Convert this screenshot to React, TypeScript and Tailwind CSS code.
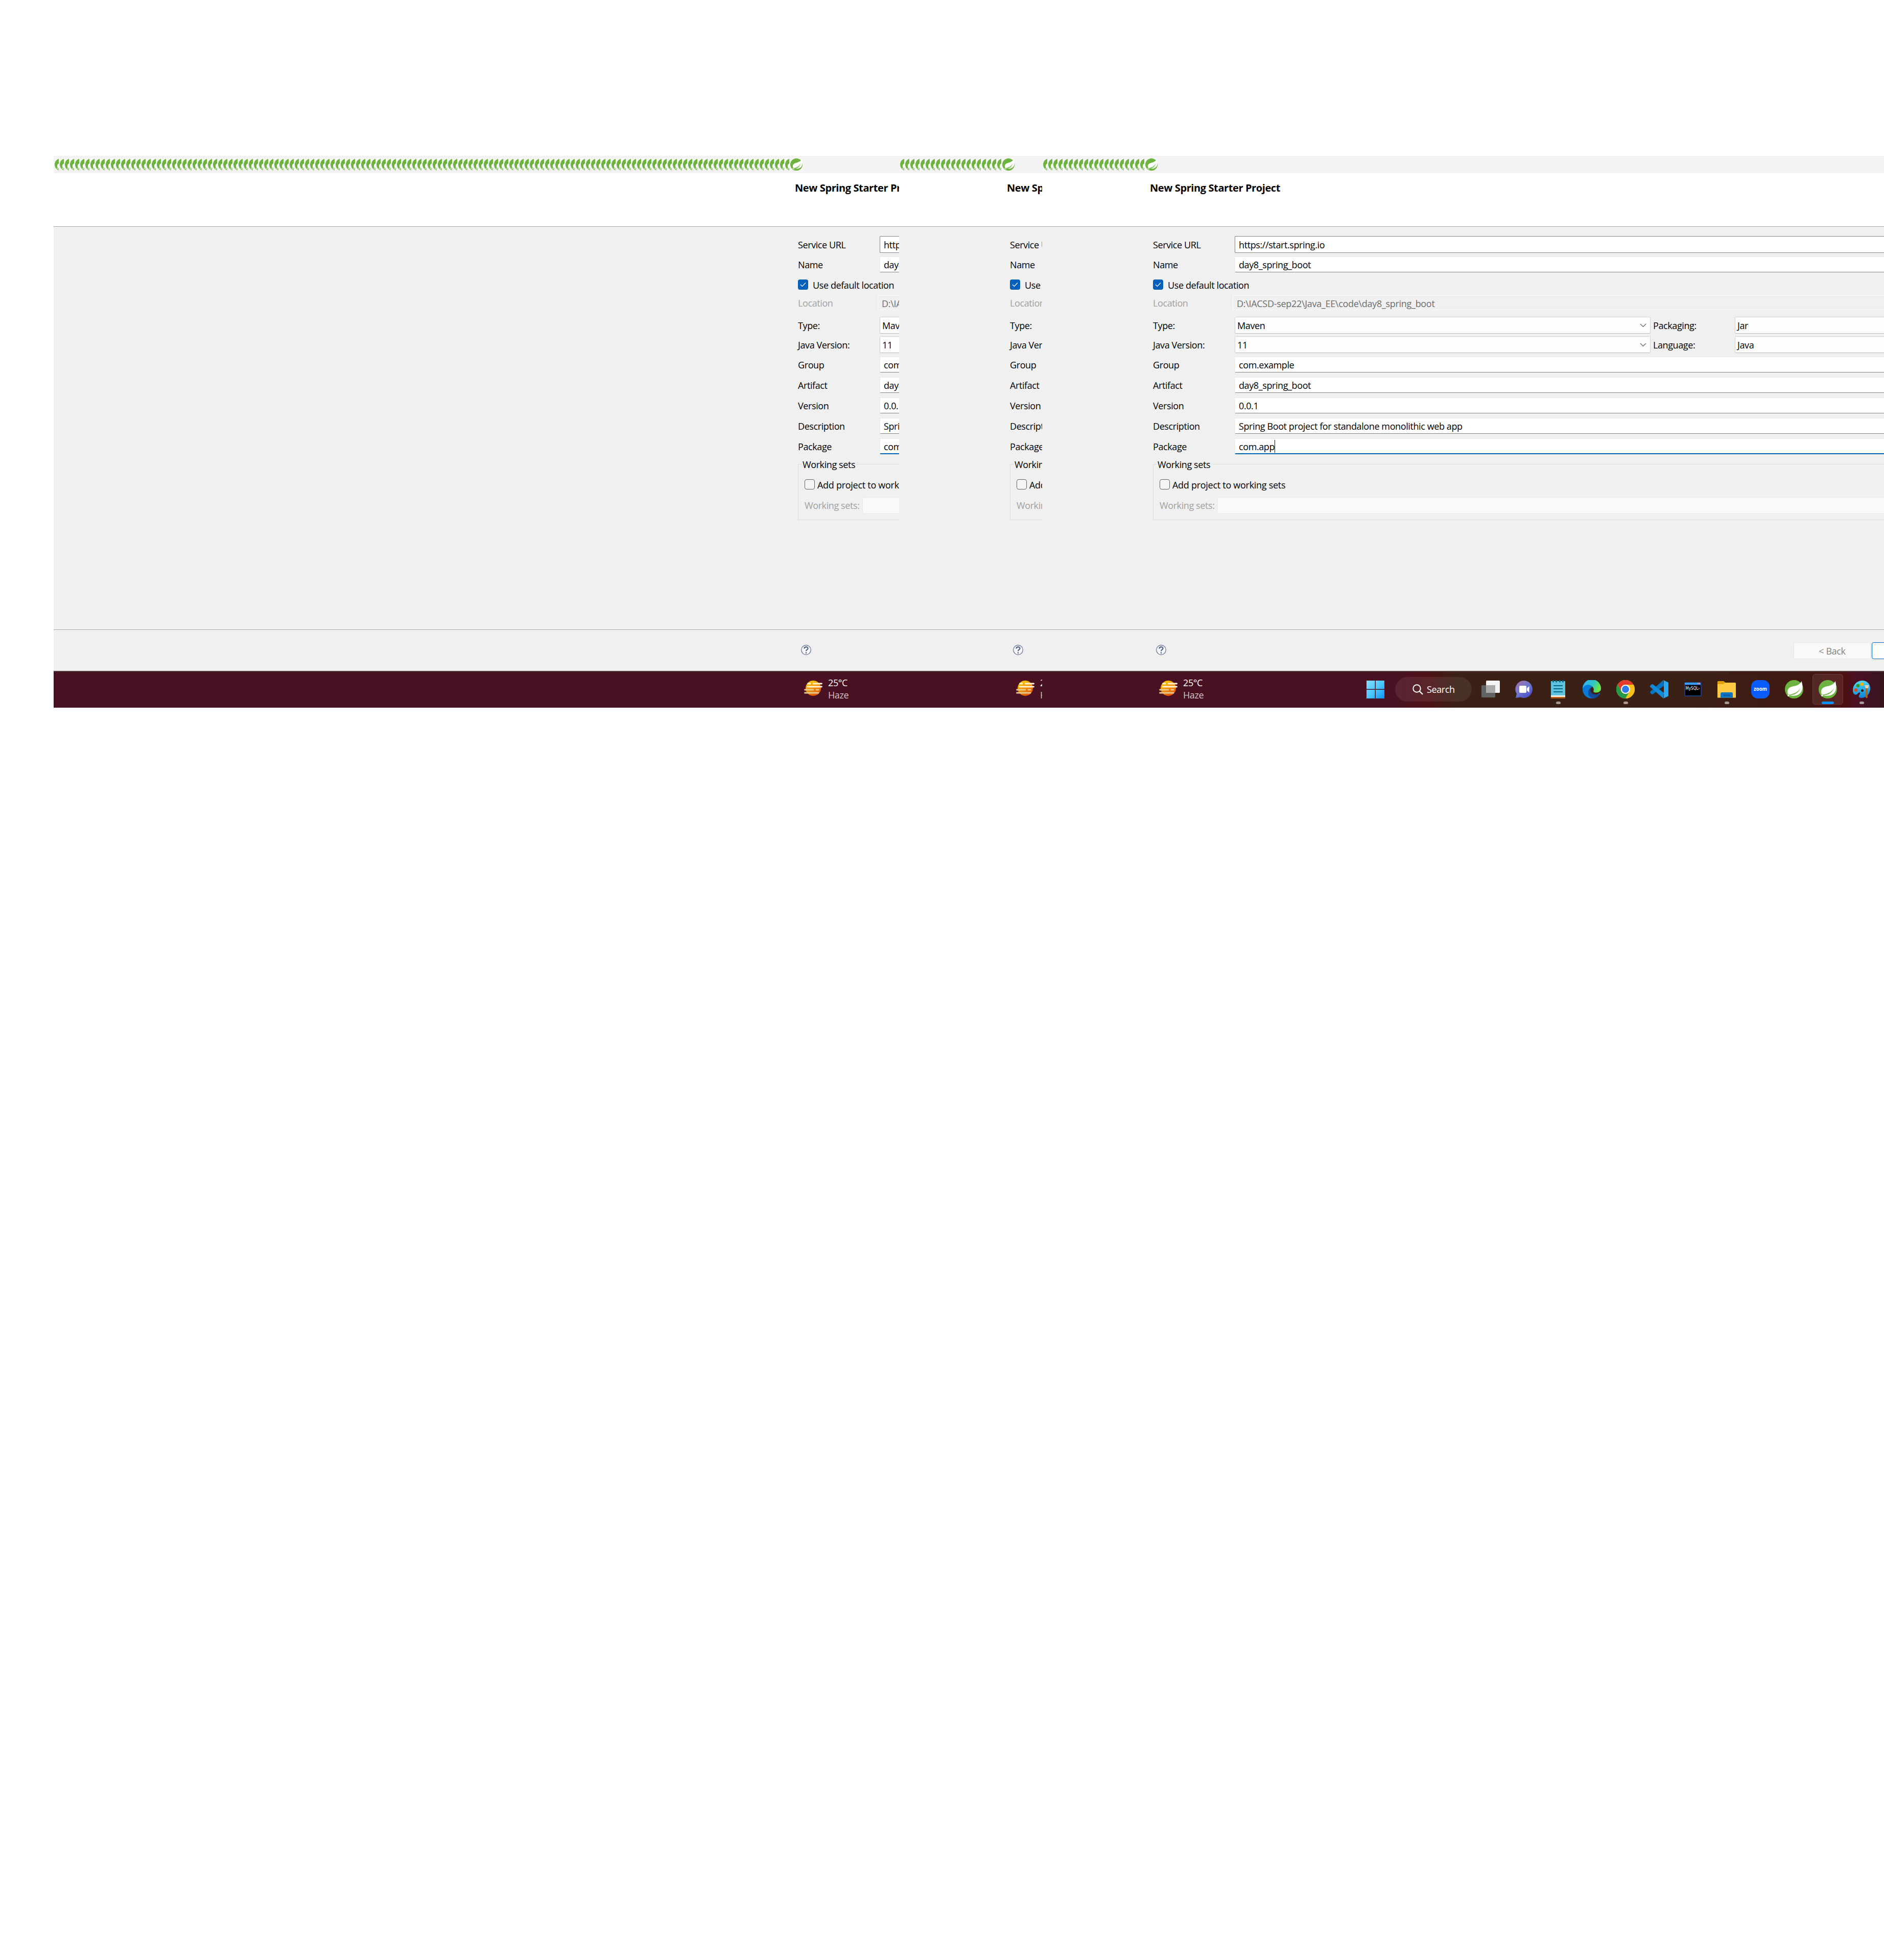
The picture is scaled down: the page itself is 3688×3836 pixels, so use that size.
import React from "react";

const BASE = "whitespace-nowrap font-['Open_Sans','Noto_Sans',sans-serif] text-[18px] leading-[24px] tracking-[-0.4px]";

function LeafIcon({ slice = false }: { slice?: boolean }) {
  return (
    <svg width={slice ? 8 : 24} height="24" viewBox={slice ? "0 0 8 24" : "0 0 24 24"} className="block shrink-0">
      <rect width="24" height="24" fill="#ffffff" opacity="0.3" />
      <circle cx="12" cy="12" r="12" fill="#6db33f" />
      <path d="M22.500 1.500C20 6 16 7.500 11.500 8.700C7 10 4.700 12 4.900 15.500C5 18 6.500 19 8 19.500C14 21.500 21 19.500 23.300 13C24.200 9 23.500 5 22.500 1.500Z" fill="#fff" />
      <path d="M20.500 9C18 14.500 13.500 17.500 8 18.500L6.500 20.500C13 21 18.500 18 20.500 9Z" fill="#8cc566" />
      <path d="M4.500 19L7.500 21.500" stroke="#e4f1dc" strokeWidth="1.400" />
    </svg>
  );
}

function Row({ className, children }: { className: string; children: React.ReactNode }) {
  return <div className={`flex items-start ${className}`}>{children}</div>;
}

function Label({ children, className }: { children: React.ReactNode; className: string }) {
  return <div className={`shrink-0 ${className}`}>{children}</div>;
}

function Field({ label, value, mt, focus = false }: { label: string; value: string; mt: string; focus?: boolean }) {
  return (
    <Row className={`h-[31px] ${mt}`}>
      <Label className="w-[160px] pt-1">{label}</Label>
      <div className={`flex h-[31px] grow items-center rounded-l-[2px] border-t border-l border-[#ebebeb] bg-white pl-[7px] pt-px ${focus ? "border-b-2 border-b-[#0067c0]" : "border-b border-b-[#868686]"}`}>
        <span>{value}</span>
        {focus && <span className="h-[25px] w-px bg-black" />}
      </div>
    </Row>
  );
}

function Combo({ value, className, arrow = false }: { value: string; className: string; arrow?: boolean }) {
  return (
    <div className={`flex h-[33px] shrink-0 items-center justify-between rounded-[2px] border border-[#d2d2d2] border-b-[#bcbcbc] bg-[#fdfdfd] pl-1 pr-[7px] pt-px ${className}`}>
      <span>{value}</span>
      {arrow && (
        <svg width="13" height="8" viewBox="0 0 13 8" className="mb-px">
          <path d="M1 1L6.500 6.500L12 1" fill="none" stroke="#5f5f5f" strokeWidth="1.200" />
        </svg>
      )}
    </div>
  );
}

function Form() {
  return (
    <div className="flex h-[787px] flex-col bg-[#f0f0f0] pl-[17px]">
      <Row className="mt-[17px] h-[33px]">
        <Label className="w-[160px] pt-[5px]">Service URL</Label>
        <div className="flex h-[33px] grow items-center rounded-l-[2px] border border-r-0 border-[#868686] bg-white pl-[7px]">https://start.spring.io</div>
      </Row>
      <Field label="Name" value="day8_spring_boot" mt="mt-[7px]" />
      <Row className="mt-[14px] h-5">
        <div className="flex size-5 shrink-0 items-center justify-center rounded-[4px] bg-[#005fb8]">
          <svg width="12" height="10" viewBox="0 0 12 10">
            <path d="M1 5L4.500 8.500L11 1.500" fill="none" stroke="#fff" strokeWidth="1.200" />
          </svg>
        </div>
        <span className="-mt-px pl-[9px]">Use default location</span>
      </Row>
      <Row className="mt-[11px] h-[29px]">
        <Label className="w-[156px] pt-[3px] text-[#a0a0a0]">Location</Label>
        <div className="flex h-[29px] grow items-center border border-r-0 border-[#fafafa] pl-[7px] pt-[2px] tracking-[-0.3px] text-[#6d6d6d]">D:\IACSD-sep22\Java_EE\code\day8_spring_boot</div>
      </Row>
      <Row className="mt-[13px] h-[33px]">
        <Label className="w-[160px] pt-[5px]">Type:</Label>
        <Combo value="Maven" className="w-[814px]" arrow />
        <Label className="w-[165px] pl-[5px] pt-[5px]">Packaging:</Label>
        <Combo value="Jar" className="w-[400px]" />
      </Row>
      <Row className="mt-[5px] h-[33px]">
        <Label className="w-[160px] pt-[5px]">Java Version:</Label>
        <Combo value="11" className="w-[814px]" arrow />
        <Label className="w-[165px] pl-[5px] pt-[5px]">Language:</Label>
        <Combo value="Java" className="w-[400px]" />
      </Row>
      <Field label="Group" value="com.example" mt="mt-[7px]" />
      <Field label="Artifact" value="day8_spring_boot" mt="mt-[9px]" />
      <Field label="Version" value="0.0.1" mt="mt-[9px]" />
      <Field label="Description" value="Spring Boot project for standalone monolithic web app" mt="mt-[9px]" />
      <Field label="Package" value="com.app" mt="mt-[9px]" focus />
      <div className="mt-[19px] h-[110px] border border-r-0 border-[#dcdcdc]">
        <div className="-mt-[12px] ml-[6px] w-[107px] bg-[#f0f0f0] pl-[2px]">Working sets</div>
        <div className="mt-[17px] flex h-5 items-start pl-3">
          <span className="size-5 shrink-0 rounded-[4px] border border-[#626262] bg-[#f5f5f5]" />
          <span className="-mt-px pl-[5px] tracking-[-0.28px]">Add project to working sets</span>
        </div>
        <div className="mt-[15px] flex h-8 items-center pl-3">
          <span className="w-[113px] shrink-0 text-[#a0a0a0]">Working sets:</span>
          <span className="h-8 grow rounded-l-[2px] border border-r-0 border-[#ebebeb] bg-[#f9f9f9]" />
        </div>
      </div>
    </div>
  );
}

function Weather() {
  return (
    <div className="flex w-[200px] shrink-0 pl-[29px] pt-[9px]">
      <svg width="36" height="36" viewBox="0 0 36 36" className="mt-[5px] shrink-0">
        <defs>
          <linearGradient id="sun" x1="0" y1="0" x2="0.500" y2="1">
            <stop offset="0" stopColor="#ffd800" />
            <stop offset="1" stopColor="#e35a00" />
          </linearGradient>
        </defs>
        <circle cx="18" cy="18" r="15" fill="url(#sun)" />
        <g strokeWidth="2.800" strokeLinecap="round">
          <path d="M7.500 9H12M18 9H34.500M7 15H34.500" stroke="#fff3cf" />
          <path d="M1.500 21H18M24 21H28M1.500 27H28" stroke="#e6c98d" />
        </g>
      </svg>
      <div className="flex flex-col pl-[11px] text-white">
        <span className="h-6">25°C</span>
        <span className="text-[#cfc3c7]">Haze</span>
      </div>
    </div>
  );
}

const icons: { key: string; dot?: boolean; active?: boolean; art: React.ReactNode }[] = [
  {
    key: "tasks",
    art: (
      <>
        <rect x="0" y="10" width="27" height="24" rx="1.500" fill="#626262" />
        <rect x="9" y="1" width="27" height="24" rx="1.500" fill="#f3f3f3" />
        <rect x="9" y="10" width="18" height="15" fill="#a9a9a9" />
      </>
    ),
  },
  {
    key: "chat",
    art: (
      <>
        <defs>
          <linearGradient id="chat" x1="0" y1="0.200" x2="0.600" y2="1">
            <stop offset="0" stopColor="#9a74b0" />
            <stop offset="0.500" stopColor="#6f78d0" />
            <stop offset="1" stopColor="#4f52c8" />
          </linearGradient>
        </defs>
        <path d="M18 1A17 17 0 1 1 10 33.500L1 35L3 27A17 17 0 0 1 18 1Z" fill="url(#chat)" />
        <rect x="8" y="11" width="14" height="14" rx="2" fill="#fff" />
        <path d="M23 16L27.500 12V24.500L23 20.500Z" fill="#fff" />
      </>
    ),
  },
  {
    key: "notes",
    dot: true,
    art: (
      <>
        <rect x="4" y="30" width="28" height="6" rx="1" fill="#b85a10" />
        <rect x="4" y="29" width="28" height="4" fill="#f4efe9" />
        <rect x="4" y="2" width="28" height="28" rx="1" fill="#5fc3dd" />
        <path d="M9 11H27M9 17H27M9 23H27" stroke="#04678c" strokeWidth="2" />
        <path d="M8.500 0V4.500M14.500 0V4.500M21.500 0V4.500M27.500 0V4.500" stroke="#04678c" strokeWidth="2.500" />
      </>
    ),
  },
  {
    key: "edge",
    art: (
      <>
        <defs>
          <linearGradient id="edgeA" x1="0" y1="0" x2="1" y2="0.400">
            <stop offset="0.200" stopColor="#2fb6ee" />
            <stop offset="0.600" stopColor="#2fc5c4" />
            <stop offset="1" stopColor="#6be54a" />
          </linearGradient>
        </defs>
        <circle cx="18" cy="18" r="18" fill="#0a7ad6" />
        <path d="M21 13C17 13 14 17 14.500 21C15 26 20 29.500 26 28.500C29 28 32 26.500 34 25.500L37 22L30 16Z" fill="#3a2015" />
        <path d="M0 17A18 18 0 0 1 36 16C36 21.500 32 24.500 27 24.500C23 24.500 20.500 23.500 21.500 20.500C23 16 19 10.500 13 9.500C7 8.500 2 12 0 17Z" fill="url(#edgeA)" />
        <path d="M13.500 17C9 23 10 33 20 36C27 35.500 31 32 33.500 26.500C28 29 21 29 17.500 25C15 22 14.500 19 16 15Z" fill="#114a9b" />
      </>
    ),
  },
  {
    key: "chrome",
    dot: true,
    art: (
      <>
        <circle cx="18" cy="18" r="18" fill="#fbc116" />
        <path d="M2.400 9A18 18 0 0 1 33.600 9H18A9 9 0 0 0 10.200 22.500Z" fill="#e33b2e" />
        <path d="M2.400 9L10.200 22.500A9 9 0 0 0 25.800 22.500L18 36A18 18 0 0 1 2.400 9Z" fill="#269a48" />
        <path d="M33.600 9H18V18L25.800 22.500L18 36A18 18 0 0 0 33.600 9Z" fill="#fbc116" />
        <circle cx="18" cy="18" r="9" fill="#fff" />
        <circle cx="18" cy="18" r="7" fill="#2f7bee" />
      </>
    ),
  },
  {
    key: "code",
    art: (
      <>
        <path d="M26 0L27 11L6 27.500Q4 28.500 2.500 27L0.500 25Q-0.500 23.500 1 22Z" fill="#0074c2" />
        <path d="M26 36L27 25L6 8.500Q4 7.500 2.500 9L0.500 11Q-0.500 12.500 1 14Z" fill="#118ad8" />
        <path d="M26 0L34.500 4Q36 4.700 36 6V30Q36 31.300 34.500 32L26 36Q27 35 27 33V3Q27 1 26 0Z" fill="#29a9f3" />
      </>
    ),
  },
  {
    key: "mysql",
    art: (
      <>
        <rect x="1" y="4" width="34" height="28" rx="2" fill="#183c7c" />
        <rect x="2" y="5" width="31" height="4" fill="#3a9cf5" />
        <rect x="27" y="5" width="5" height="3" fill="#d98890" />
        <rect x="3" y="10" width="30" height="20" fill="#000" />
        <text x="3.500" y="18.500" fontSize="8.500" fill="#fff" textLength="28" lengthAdjust="spacingAndGlyphs" fontFamily="DejaVu Sans" letterSpacing="0">MySQL›</text>
      </>
    ),
  },
  {
    key: "files",
    dot: true,
    art: (
      <>
        <path d="M0 3.500Q0 2 1.500 2H12L16 5.500V10H0Z" fill="#e2a008" />
        <path d="M0 8H11L15 5H34.500Q36 5 36 6.500V34.500H0Z" fill="#ffcb45" />
        <path d="M6 34.500V27Q6 24 9 24H27Q30 24 30 27V34.500Z" fill="#0a74c4" />
        <path d="M11 29.500H25" stroke="#064a86" strokeWidth="1.500" />
      </>
    ),
  },
  {
    key: "zoom",
    art: (
      <>
        <rect width="36" height="36" rx="13" fill="#0b5cff" />
        <text x="5" y="20.500" fontSize="10.500" fontWeight="700" fill="#fff" textLength="26" lengthAdjust="spacingAndGlyphs" fontFamily="Open Sans" letterSpacing="0">zoom</text>
      </>
    ),
  },
  { key: "spring", art: <SpringArt /> },
  { key: "springTools", active: true, art: <SpringArt /> },
  {
    key: "paint",
    dot: true,
    art: (
      <>
        <defs>
          <linearGradient id="pal" x1="0.300" y1="0" x2="0.500" y2="1">
            <stop offset="0" stopColor="#4fdcf5" />
            <stop offset="1" stopColor="#0f82d8" />
          </linearGradient>
        </defs>
        <path d="M18 1C28 0 35 7 35 16C35 27 28 34.500 18 35C12.500 35 11.500 32 14 28.500C17 24.500 13.500 22.500 11 26C8 30.500 1.500 30 1 20C1 10 8 2 18 1Z" fill="url(#pal)" />
        <circle cx="19.500" cy="20.500" r="2.500" fill="#3c1b12" />
        <circle cx="11" cy="11" r="3.300" fill="#2f9a1c" />
        <circle cx="19" cy="8" r="3.300" fill="#f7b500" />
        <circle cx="7" cy="19.500" r="3.300" fill="#dd4d14" />
        <path d="M28 16V33.500" stroke="#b3650e" strokeWidth="3.500" strokeLinecap="round" />
        <path d="M24 10H32.500L31 16H26Z" fill="#ecd0a8" />
      </>
    ),
  },
];

function SpringArt() {
  return (
    <>
      <circle cx="18" cy="18" r="18" fill="#6db33f" />
      <path d="M32.500 2C30 8 25 10.500 17 12C9 13.500 5 17 5 23C5 26 6 28.500 8 30C20 32 29 30 33 21C35.500 15 34.500 8 32.500 2Z" fill="#fff" />
      <path d="M31 14.500C27 22 21 26 9.500 28.500L8.500 30C19 29.500 27 25 31 14.500Z" fill="#6db33f" />
      <circle cx="7" cy="30" r="2.400" fill="#6db33f" />
      <circle cx="7" cy="30" r="1.700" fill="#fff" />
    </>
  );
}

function TaskbarApps() {
  return (
    <div className="flex shrink-0 pl-[235px]">
      <svg width="35" height="35" viewBox="0 0 35 35" className="mt-[17px] shrink-0">
        <defs>
          <linearGradient id="win" x1="0" y1="0" x2="1" y2="1">
            <stop offset="0" stopColor="#86dcff" />
            <stop offset="0.500" stopColor="#4cc8ff" />
            <stop offset="1" stopColor="#0a95ff" />
          </linearGradient>
        </defs>
        <path d="M0 0H16.500V16.500H0ZM18 0H35V16.500H18ZM0 18H16.500V35H0ZM18 18H35V35H18Z" fill="url(#win)" />
      </svg>
      <div className="ml-[21px] mt-[10px] flex h-12 w-[150px] shrink-0 items-center rounded-full bg-white/8 pl-[34px]">
        <svg width="21" height="21" viewBox="0 0 21 21">
          <circle cx="8.500" cy="8.500" r="7.200" fill="none" stroke="#fff" strokeWidth="2" />
          <path d="M14 14L20 20" stroke="#fff" strokeWidth="2.400" />
        </svg>
        <span className="pl-[7px] text-white">Search</span>
      </div>
      <div className="flex pl-1">
        {icons.map((i) => (
          <div key={i.key} className="flex w-[66px] shrink-0 justify-center pt-1">
            <div className={`flex h-[60px] w-[60px] flex-col items-center rounded-md border pt-[11px] ${i.active ? "border-white/10 bg-white/8" : "border-transparent"}`}>
              <svg width="36" height="36" viewBox="0 0 36 36" className="shrink-0">{i.art}</svg>
              {i.dot && <span className="mt-[6px] h-[5px] w-[9px] rounded-full bg-[#a59a98]" />}
              {i.active && <span className="mt-[6px] h-[5px] w-6 rounded-full bg-[#0a90f8]" />}
            </div>
          </div>
        ))}
      </div>
    </div>
  );
}

function Pane({ width, slices, lead, full = false }: { width: string; slices: number; lead: string; full?: boolean }) {
  return (
    <section className={`h-[1080px] shrink-0 overflow-hidden ${width}`}>
      <div className="flex h-[34px] items-start bg-[#f3f3f3] pt-[5px]">
        {Array.from({ length: slices }, (_, i) => (
          <div key={i} className="w-[10px] shrink-0 pl-[2px]">
            <LeafIcon slice />
          </div>
        ))}
        <div className="pl-[2px]">
          <LeafIcon />
        </div>
      </div>
      <div className={`h-[104px] bg-white pt-[17px] ${lead}`}>
        <div className="pl-[11px] text-[20px] font-bold leading-[24px] tracking-[-0.4px] text-black">New Spring Starter Project</div>
      </div>
      <div className="h-[2px] border-b border-white bg-[#a0a0a0]" />
      <div className={`bg-[#f0f0f0] ${lead}`}>
        <div className="w-[1700px]">
          <Form />
        </div>
      </div>
      <div className="h-[2px] border-b border-white bg-[#a0a0a0]" />
      <div className={`flex h-[79px] items-start bg-[#f0f0f0] ${lead}`}>
        <svg width="20" height="20" viewBox="0 0 20 20" className="ml-[23px] mt-[28px] shrink-0">
          <circle cx="10" cy="10" r="9.300" fill="#f7f8fa" stroke="#5b6b8c" strokeWidth="1.200" />
          <path d="M6.500 7.500C6.500 3 13.500 3 13.500 7C13.500 9.500 10 9.500 10 12.500" fill="none" stroke="#53648a" strokeWidth="2.200" />
          <circle cx="10" cy="15.800" r="1.400" fill="#53648a" />
        </svg>
        {full && (
          <>
            <div className="ml-[1228px] mt-[23px] flex h-[33px] w-[151px] shrink-0 items-center justify-center rounded-[4px] border border-[#e8e8e8] bg-[#f9f9f9] pt-px text-[#838383]">&lt; Back</div>
            <div className="ml-[2px] mt-[23px] h-[33px] w-[151px] shrink-0 rounded-[4px] border border-[#0067c0] bg-[#fdfdfd]" />
          </>
        )}
      </div>
      <div
        className={`flex h-[72px] border-t-2 border-[#553d40] ${lead} ${
          full
            ? "bg-[linear-gradient(90deg,#4a1122_0px,#4a1122_700px,#4e1216_755px,#3a2015_810px,#3a2015_1250px,#3f1a12_1480px,#4c1012_1570px,#481026_1600px,#35161d_1648px)]"
            : "bg-[#4a1122]"
        }`}
      >
        <Weather />
        {full && <TaskbarApps />}
      </div>
    </section>
  );
}

export default function App() {
  return (
    <main className={`h-[3836px] w-[3688px] overflow-hidden bg-white pl-[105px] pt-[305px] text-black ${BASE}`}>
      <div className="flex">
        <Pane width="w-[1655px]" slices={144} lead="pl-[1440px]" />
        <Pane width="w-[280px]" slices={20} lead="pl-[200px]" />
        <Pane width="w-[1648px]" slices={20} lead="pl-[200px]" full />
      </div>
    </main>
  );
}
